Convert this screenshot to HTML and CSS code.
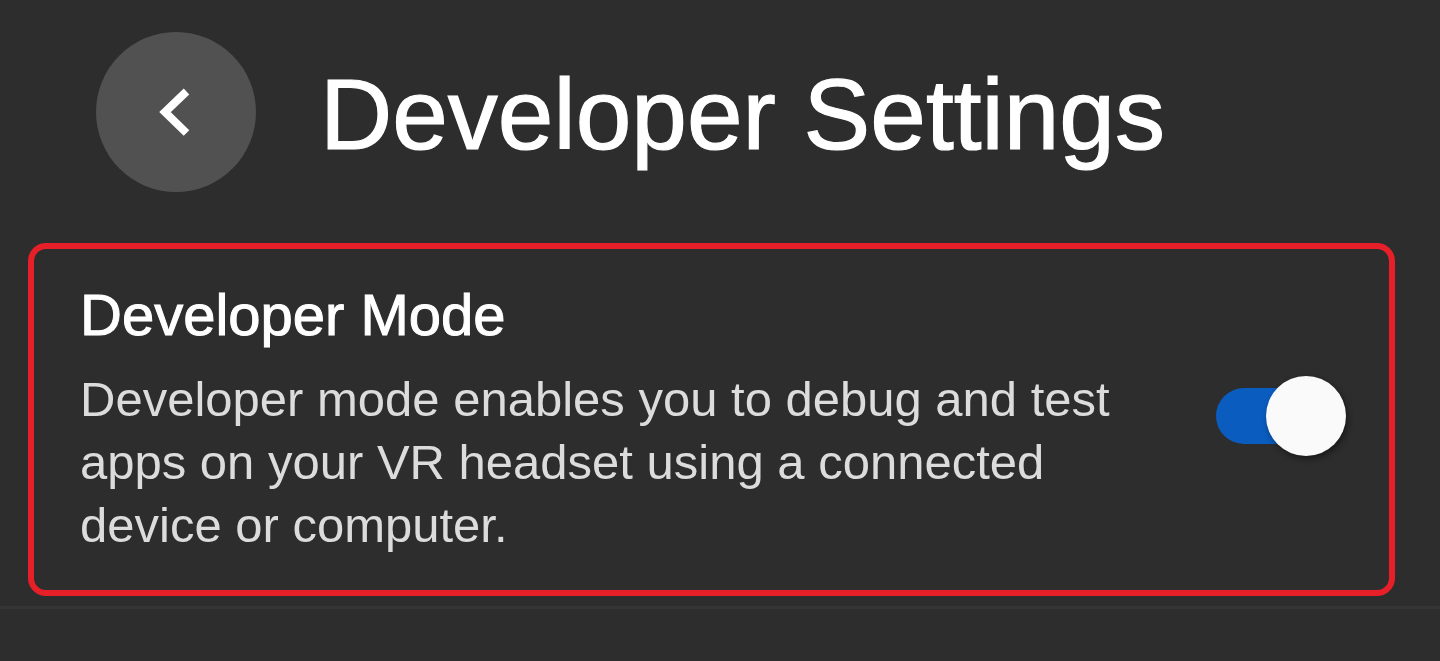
FILE: index.html
```html
<!DOCTYPE html>
<html>
<head>
<meta charset="utf-8">
<link rel="stylesheet" href="styles.css">
</head>
<body>
<div class="page">
  <header class="header">
    <div class="back">
      <svg width="160" height="160" viewBox="0 0 160 160">
        <polyline points="90.5,59.5 69,80 90.5,101" fill="none" stroke="#ffffff" stroke-width="8" stroke-linecap="butt" stroke-linejoin="miter"/>
      </svg>
    </div>
    <h1 class="title">Developer Settings</h1>
  </header>
  <section class="card">
    <div class="card-text">
      <h2 class="card-title">Developer Mode</h2>
      <p class="card-desc">Developer mode enables you to debug and test apps on your VR headset using a connected device or computer.</p>
    </div>
    <div class="toggle">
      <div class="track"></div>
      <div class="knob"></div>
    </div>
  </section>
  <div class="divider"></div>
</div>
</body>
</html>
```
FILE: styles.css
```css
html, body {
  margin: 0;
  padding: 0;
  background: #2d2d2d;
  height: 100%;
  overflow: hidden;
}
.page {
  font-family: "Liberation Sans", Arial, sans-serif;
  color: #ffffff;
}
.header {
  display: flex;
  align-items: center;
  padding: 32px 0 0 96px;
  height: 160px;
}
.back {
  width: 160px;
  height: 160px;
  border-radius: 50%;
  background: #515151;
  flex: none;
}
.back svg { display: block; }
.title {
  margin: 0 0 0 64px;
  font-size: 100px;
  font-weight: 400;
  line-height: 1;
  letter-spacing: 0;
  color: #ffffff;
  -webkit-text-stroke: 1.2px #ffffff;
  position: relative;
  top: 2px;
}
.card {
  margin: 51px 0 0 28px;
  width: 1367px;
  height: 353px;
  box-sizing: border-box;
  border: 6px solid #e61f28;
  border-radius: 18px;
  display: flex;
  align-items: flex-start;
  padding: 0 0 0 46px;
}
.card-text {
  width: 1086px;
  flex: none;
  padding-top: 34px;
}
.card-title {
  margin: 0;
  font-size: 58px;
  font-weight: 400;
  line-height: 64px;
  color: #ffffff;
  -webkit-text-stroke: 1px #ffffff;
}
.card-desc {
  margin: 21px 0 0 0;
  font-size: 49px;
  line-height: 63px;
  color: #dcdcdc;
}
.toggle {
  position: relative;
  width: 132px;
  height: 80px;
  margin-left: 50px;
  flex: none;
  margin-top: 127px;
}
.track {
  position: absolute;
  left: 0;
  top: 12px;
  width: 110px;
  height: 56px;
  border-radius: 28px;
  background: #0a5cbe;
}
.knob {
  position: absolute;
  left: 50px;
  top: 0;
  width: 80px;
  height: 80px;
  border-radius: 50%;
  background: #fafafa;
  box-shadow: 2px 3px 6px rgba(0,0,0,0.45);
}
.divider {
  margin-top: 10px;
  height: 3px;
  background: #353535;
}
```
